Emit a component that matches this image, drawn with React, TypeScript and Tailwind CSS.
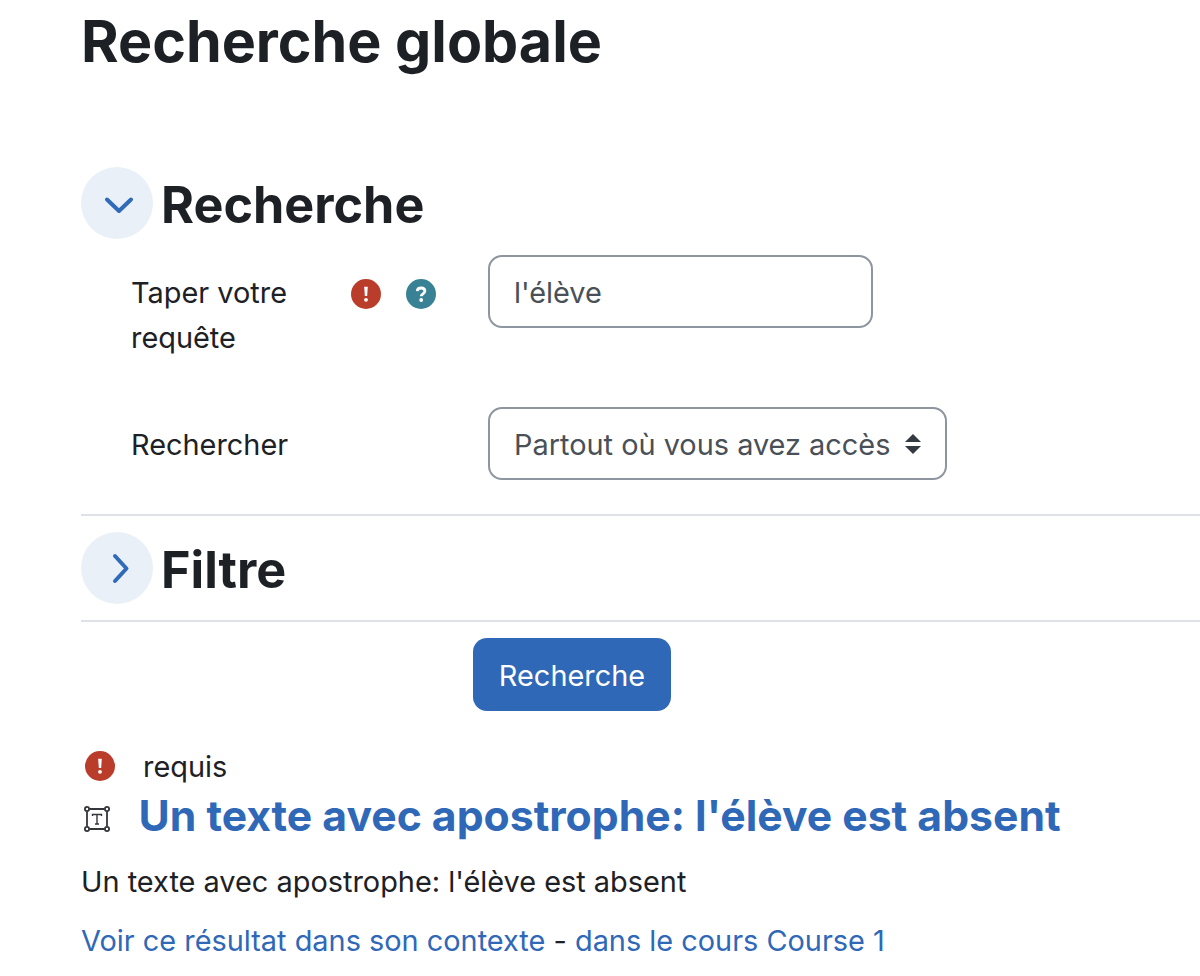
import React from "react";

function RequiredIcon() {
  return (
    <span className="flex h-[30px] w-[30px] shrink-0 items-center justify-center rounded-full bg-[#ba3c2a]">
      <svg width="30" height="30" viewBox="0 0 30 30" fill="#fff">
        <path d="M13.200 7.800h3.600l-.6 9.200h-2.400z" />
        <circle cx="15" cy="20.800" r="1.900" />
      </svg>
    </span>
  );
}

function HelpIcon() {
  return (
    <span className="flex h-[30px] w-[30px] shrink-0 items-center justify-center rounded-full bg-[#398296]">
      <svg width="30" height="30" viewBox="0 0 30 30" fill="none">
        <path
          d="M11.200 12.200c.2-2 1.800-3.200 3.900-3.200 2.200 0 3.800 1.300 3.800 3.100 0 2.900-3.700 2.600-3.700 5.200"
          stroke="#fff"
          strokeWidth="2.800"
        />
        <circle cx="15.200" cy="21" r="1.900" fill="#fff" />
      </svg>
    </span>
  );
}

function Toggle({ open }: { open: boolean }) {
  return (
    <span className="flex h-[72px] w-[72px] shrink-0 items-center justify-center rounded-full bg-[#e9f0f8]">
      <svg width="72" height="72" viewBox="0 0 72 72" fill="none">
        {open ? (
          <path
            d="M26 32.500l12 11.500 12-11.500"
            stroke="#2f6bb9"
            strokeWidth="4"
            strokeLinecap="round"
            strokeLinejoin="round"
          />
        ) : (
          <path
            d="M34 24l11.500 12.500-11.500 12.500"
            stroke="#2f6bb9"
            strokeWidth="4"
            strokeLinecap="round"
            strokeLinejoin="round"
          />
        )}
      </svg>
    </span>
  );
}

function TextAreaIcon() {
  return (
    <svg width="26" height="26" viewBox="0 0 26 26" fill="none" stroke="#33373b" strokeWidth="1.800" className="mt-[8px] shrink-0">
      <path d="M3 5.500v15M23 5.500v15M5.500 3h15M5.500 23h15" />
      <circle cx="3" cy="3" r="2.100" />
      <circle cx="23" cy="3" r="2.100" />
      <circle cx="3" cy="23" r="2.100" />
      <circle cx="23" cy="23" r="2.100" />
      <path d="M8.500 10V8.500h9V10M13 8.500v9.500M11 18h4" strokeWidth="1.400" />
    </svg>
  );
}

export default function App() {
  return (
    <div className="min-h-[976px] overflow-hidden bg-white pl-[81px] font-['Inter',sans-serif] text-[28.900px] leading-[45px] text-[#1d2125]">
      <h1 className="flex h-[84px] items-center text-[57.400px] font-bold leading-none">Recherche globale</h1>

      <section className="mt-[83px]">
        <div className="flex h-[72px] items-center gap-[8px]">
          <Toggle open />
          <h2 className="pt-[5px] text-[50.300px] font-bold leading-none">Recherche</h2>
        </div>

        <div className="mt-[16px] flex items-start pl-[50px]">
          <div className="flex w-[357px] pt-[15px]">
            <label className="w-[220px]">Taper votre requête</label>
            <div className="flex gap-[25px] pt-[9px]">
              <RequiredIcon />
              <HelpIcon />
            </div>
          </div>
          <div className="flex h-[73px] w-[385px] items-center rounded-[14px] border-2 border-[#8f959e] pl-[24px] pt-[2px] text-[#495057]">
            l'élève
          </div>
        </div>

        <div className="mt-[47px] flex items-center pl-[50px]">
          <label className="w-[357px] pt-[2px]">Rechercher</label>
          <div className="flex h-[73px] w-[459px] items-center justify-between rounded-[14px] border-2 border-[#8f959e] px-[24px] text-[#495057]">
            <span className="pt-[2px]">Partout où vous avez accès</span>
            <svg width="16" height="20" viewBox="0 0 16 20" fill="#343a40">
              <path d="M8 0l8 8H0zM8 20l-8-8h16z" />
            </svg>
          </div>
        </div>
      </section>

      <hr className="mt-[34px] border-0 border-t-2 border-[#dee2e6]" />

      <section className="mt-[16px]">
        <div className="flex h-[72px] items-center gap-[8px]">
          <Toggle open={false} />
          <h2 className="pt-[4px] text-[50.300px] font-bold leading-none">Filtre</h2>
        </div>
      </section>

      <hr className="mt-[16px] border-0 border-t-2 border-[#dee2e6]" />

      <div className="mt-[16px] pl-[392px]">
        <button className="flex h-[73px] w-[198px] items-center justify-center rounded-[14px] bg-[#3068b8] pt-[2px] text-white">
          Recherche
        </button>
      </div>

      <div className="mt-[40px] flex h-[30px] items-center pl-[4px]">
        <RequiredIcon />
        <span className="ml-[28px]">requis</span>
      </div>

      <div className="mt-[11px] flex h-[46px] items-center pl-[3px]">
        <TextAreaIcon />
        <a className="ml-[28.500px] pt-[2px] text-[42.700px] font-bold leading-none text-[#3068b8]">
          Un texte avec apostrophe: l'élève est absent
        </a>
      </div>

      <p className="mt-[21px]">Un texte avec apostrophe: l'élève est absent</p>

      <p className="mt-[14px] text-[#3068b8]">
        <a>Voir ce résultat dans son contexte</a>
        <span className="text-[#1d2125]"> - </span>
        <a>dans le cours Course 1</a>
      </p>
    </div>
  );
}
